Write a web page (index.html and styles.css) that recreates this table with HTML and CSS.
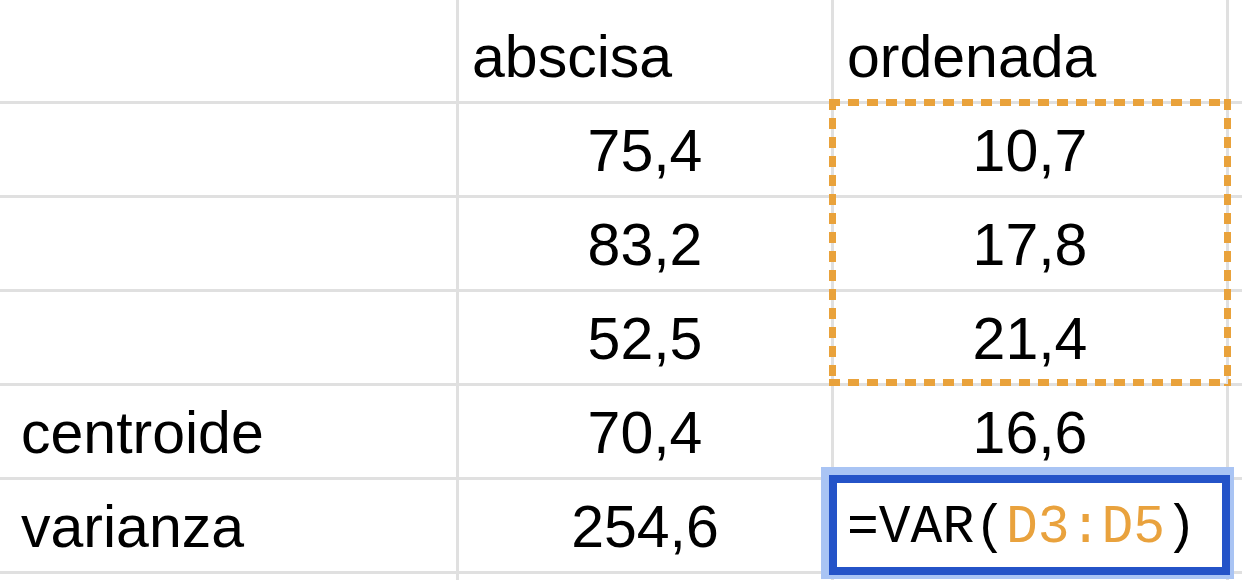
FILE: index.html
```html
<!DOCTYPE html>
<html lang="es">
<head>
<meta charset="utf-8">
<title>Hoja de cálculo</title>
<link rel="stylesheet" href="styles.css">
</head>
<body>
<div class="sheet">
  <div class="cell"></div><div class="cell"></div><div class="cell"></div><div class="cell"></div><div class="cell"></div>

  <div class="cell"></div><div class="cell"></div><div class="cell">abscisa</div><div class="cell">ordenada</div><div class="cell"></div>

  <div class="cell"></div><div class="cell"></div><div class="cell num">75,4</div><div class="cell num">10,7</div><div class="cell"></div>

  <div class="cell"></div><div class="cell"></div><div class="cell num">83,2</div><div class="cell num">17,8</div><div class="cell"></div>

  <div class="cell"></div><div class="cell"></div><div class="cell num">52,5</div><div class="cell num">21,4</div><div class="cell"></div>

  <div class="cell"></div><div class="cell">centroide</div><div class="cell num">70,4</div><div class="cell num">16,6</div><div class="cell"></div>

  <div class="cell"></div><div class="cell">varianza</div><div class="cell num">254,6</div>
  <div class="cell editor"><div class="editor-box">=VAR(<span class="ref">D3:D5</span>)</div></div>
  <div class="cell"></div>

  <div class="cell"></div><div class="cell"></div><div class="cell"></div><div class="cell"></div><div class="cell"></div>

  <div class="copy-range"></div>
</div>
</body>
</html>
```
FILE: styles.css
```css
html, body {
  margin: 0;
  background: #ffffff;
}

.sheet {
  position: relative;
  display: grid;
  grid-template-columns: 5px 448px 372px 392px 13px;
  grid-template-rows: 7px repeat(6, 91px) 6px;
  gap: 3px;
  width: 1242px;
  background: #e0e0e0;
  font-family: "Liberation Sans", Arial, sans-serif;
  font-size: 59px;
  color: #000000;
}

.cell {
  background: #ffffff;
  display: flex;
  align-items: flex-end;
  line-height: 59px;
  padding: 0 13px 14px;
  min-width: 0;
  white-space: nowrap;
}

.num {
  justify-content: center;
}

.editor {
  position: relative;
  z-index: 2;
  margin: -13px -8px -8px -13px;
  padding: 8px 4px 4px 8px;
  background: #a9c4f4;
  align-items: stretch;
}

.editor-box {
  flex: 1;
  display: flex;
  align-items: flex-end;
  border: 8px solid #2453c8;
  background: #ffffff;
  padding: 0 10px 12px;
  font-family: "Liberation Mono", "Courier New", monospace;
  font-size: 53px;
  line-height: 53px;
  color: #000000;
}

.ref {
  color: #e9a23d;
}

.copy-range {
  position: absolute;
  grid-row: 3 / 6;
  grid-column: 4 / 5;
  top: -5px;
  right: -5px;
  bottom: -3px;
  left: -5px;
  z-index: 1;
  background:
    repeating-linear-gradient(90deg, #e9a23b 0 11px, transparent 11px 19px) top left / 100% 7px no-repeat,
    repeating-linear-gradient(90deg, #e9a23b 0 11px, transparent 11px 19px) bottom left / 100% 7px no-repeat,
    repeating-linear-gradient(180deg, #e9a23b 0 11px, transparent 11px 19px) top left / 7px 100% no-repeat,
    repeating-linear-gradient(180deg, #e9a23b 0 11px, transparent 11px 19px) top right / 7px 100% no-repeat;
}
```
